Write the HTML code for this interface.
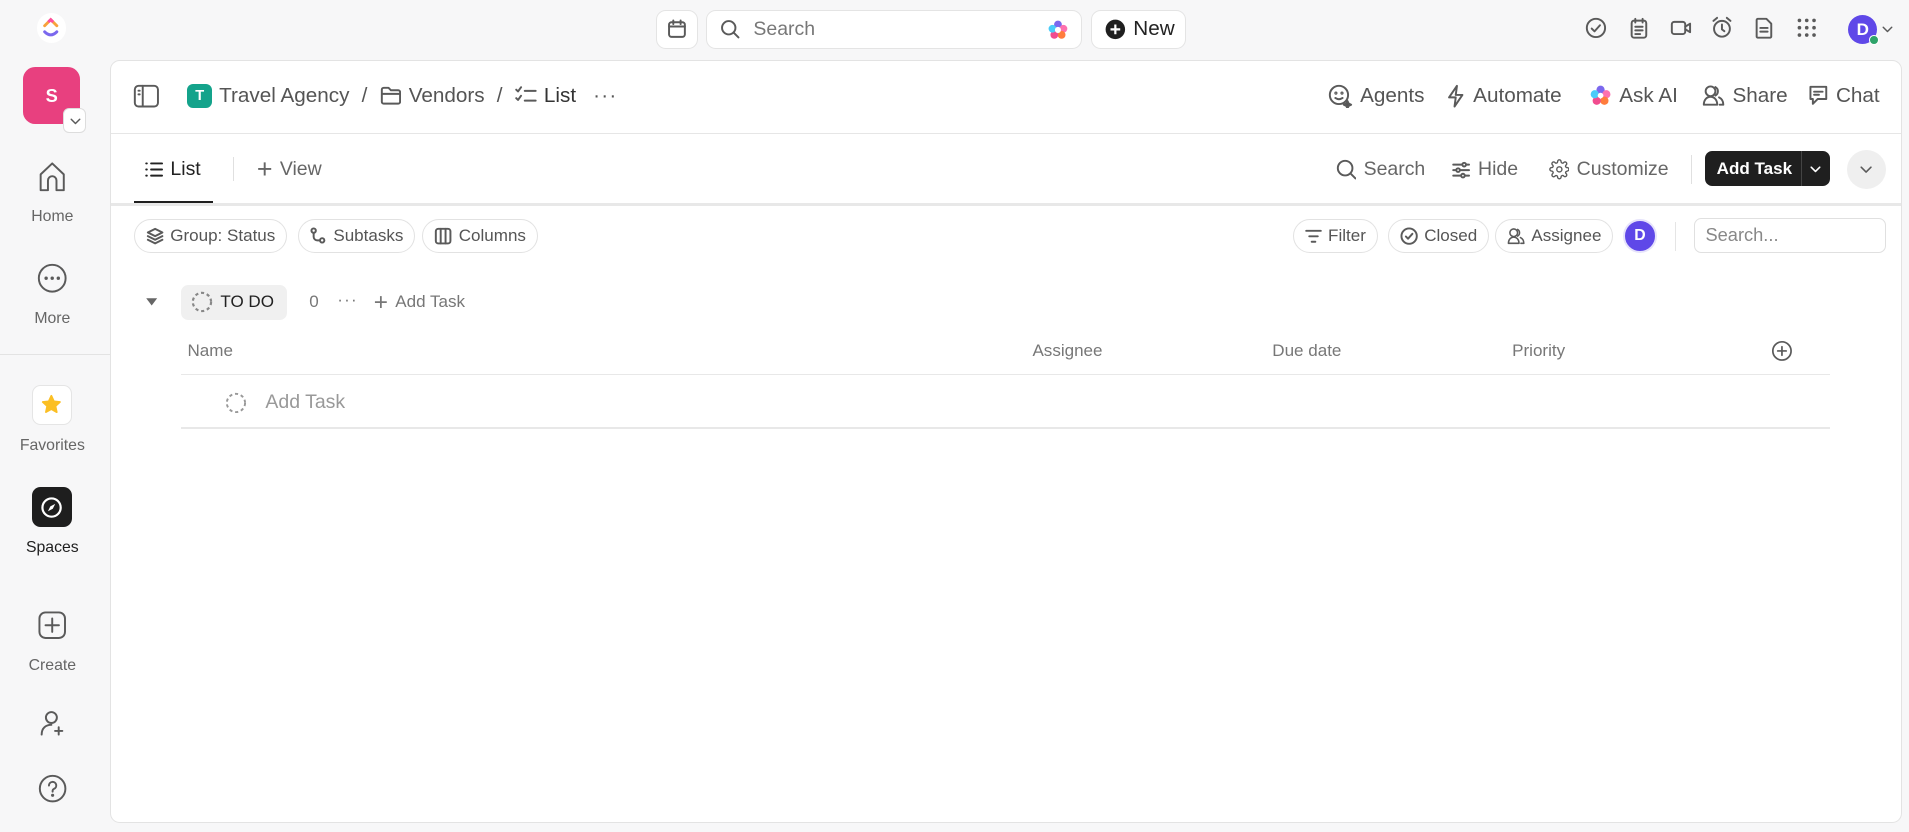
<!DOCTYPE html>
<html><head><meta charset="utf-8"><style>
html{zoom:1.2175}
*{box-sizing:border-box;margin:0;padding:0}
body{width:1568px;height:683px;background:#f7f7f8;font-family:"Liberation Sans",sans-serif;color:#555;position:relative;overflow:hidden}
.a{position:absolute}
svg{display:block}
.ic{fill:none;stroke:#5a5a5a;stroke-width:1.6;stroke-linecap:round;stroke-linejoin:round}
.nav{position:absolute;left:0;width:86px;text-align:center;font-size:13px;color:#666}
.btn{position:absolute;background:#fff;border:1px solid #e4e4e4;border-radius:8px;display:flex;align-items:center}
.chip{position:absolute;top:180px;height:28px;border:1px solid #e2e2e2;border-radius:14px;display:flex;align-items:center;gap:5px;padding:0 9px;font-size:14px;color:#555;background:#fff}
.t{display:flex;align-items:center;gap:6px;position:absolute}
</style></head><body>
<!-- top bar -->
<div class="a" style="left:30px;top:11px;width:24px;height:24px;border-radius:12px;background:#fff"></div>
<svg class="a" style="left:34px;top:13px" width="16" height="20" viewBox="0 0 16 20"><path d="M3 8 L8 3 L13 8" fill="none" stroke="#f7a23b" stroke-width="2.4" stroke-linecap="round"/><path d="M3 13 Q8 18 13 13" fill="none" stroke="#7b68ee" stroke-width="2.4" stroke-linecap="round"/><path d="M6 5 L8 3 L10 5" fill="none" stroke="#fd4ea0" stroke-width="2.4"/></svg>
<div class="btn" style="left:539px;top:8px;width:34px;height:32px;justify-content:center"><svg width="18" height="18" viewBox="0 0 18 18" class="ic"><rect x="2.5" y="3.5" width="13" height="12" rx="2"/><path d="M2.5 7h13M6 2v3M12 2v3"/></svg></div>
<div class="btn" style="left:580px;top:8px;width:309px;height:32px;padding-left:10px"><svg width="18" height="18" viewBox="0 0 18 18" class="ic"><circle cx="8" cy="8" r="5.5"/><path d="M12 12l4 4"/></svg><span style="margin-left:10px;font-size:16px;color:#777">Search</span>
<svg class="a" style="right:10px;top:7px" width="18" height="18" viewBox="0 0 18 18"><circle cx="9" cy="4.5" r="3.2" fill="#7b68ee"/><circle cx="13.5" cy="8" r="3.2" fill="#fd71af"/><circle cx="12" cy="13" r="3.2" fill="#ff7c3d"/><circle cx="6" cy="13" r="3.2" fill="#f14c8f"/><circle cx="4.5" cy="8" r="3.2" fill="#49ccf9"/><circle cx="9" cy="9" r="2.5" fill="#fff"/></svg></div>
<div class="btn" style="left:896px;top:8px;width:78px;height:32px;padding-left:11px;gap:6px"><svg width="17" height="17" viewBox="0 0 17 17"><circle cx="8.5" cy="8.5" r="8" fill="#1f1f1f"/><path d="M8.5 4.5v8M4.5 8.5h8" stroke="#fff" stroke-width="1.8"/></svg><span style="font-size:17px;color:#222">New</span></div>
<svg class="a ic" style="left:1302px;top:14px" width="18" height="18" viewBox="0 0 18 18"><circle cx="9" cy="9" r="7.5"/><path d="M5.5 9.5l2.3 2.3 4.5-5"/></svg>
<svg class="a ic" style="left:1337px;top:14px" width="18" height="18" viewBox="0 0 18 18"><rect x="3" y="3" width="12" height="14" rx="2"/><path d="M6 1.5v3M12 1.5v3M6 8h6M6 11h6M6 14h4"/></svg>
<svg class="a ic" style="left:1372px;top:14px" width="18" height="18" viewBox="0 0 18 18"><rect x="1.5" y="4" width="11" height="10" rx="2"/><path d="M12.5 8l4-2.5v7l-4-2.5"/></svg>
<svg class="a ic" style="left:1405px;top:13px" width="18" height="19" viewBox="0 0 18 19"><circle cx="9" cy="10.5" r="6.5"/><path d="M9 7v4l2 1.5M2 4l3-2.5M16 4l-3-2.5"/></svg>
<svg class="a ic" style="left:1440px;top:14px" width="18" height="18" viewBox="0 0 18 18"><path d="M4 1.5h7l4 4V16a1 1 0 0 1-1 1H4a1 1 0 0 1-1-1V2.5a1 1 0 0 1 1-1z"/><path d="M6 9h6M6 12h6"/></svg>
<svg class="a" style="left:1476px;top:15px" width="16" height="16" viewBox="0 0 16 16" fill="#5a5a5a"><circle cx="2" cy="2" r="1.5"/><circle cx="8" cy="2" r="1.5"/><circle cx="14" cy="2" r="1.5"/><circle cx="2" cy="8" r="1.5"/><circle cx="8" cy="8" r="1.5"/><circle cx="14" cy="8" r="1.5"/><circle cx="2" cy="14" r="1.5"/><circle cx="8" cy="14" r="1.5"/><circle cx="14" cy="14" r="1.5"/></svg>
<div class="a" style="left:1518px;top:12px;width:24px;height:24px;border-radius:12px;background:#5f48e8;color:#fff;font-weight:bold;font-size:14px;text-align:center;line-height:24px">D</div>
<div class="a" style="left:1535px;top:29px;width:8px;height:8px;border-radius:4px;background:#2ea36a;border:1px solid #fff"></div>
<svg class="a ic" style="left:1546px;top:21px;stroke-width:1.2" width="9" height="6" viewBox="0 0 9 6"><path d="M1 1l3.5 3.5L8 1"/></svg>

<!-- left nav -->
<div class="a" style="left:19px;top:55px;width:47px;height:47px;border-radius:10px;background:#e8407f;color:#fff;font-weight:bold;font-size:15px;text-align:center;line-height:47px">S</div>
<div class="a" style="left:52px;top:89px;width:19px;height:20px;border-radius:5px;background:#fff;border:1px solid #ddd"><svg class="ic" style="margin:7px 0 0 5px;stroke-width:1.2" width="9" height="6" viewBox="0 0 9 6"><path d="M1 1l3.5 3.5L8 1"/></svg></div>
<svg class="a ic" style="left:30px;top:132px" width="25" height="26" viewBox="0 0 25 26"><path d="M3 24V11L12.5 2 22 11v13h-6v-8a3.5 3.5 0 0 0-7 0v8z"/></svg>
<div class="nav" style="top:171px">Home</div>
<svg class="a ic" style="left:30px;top:216px" width="25" height="25" viewBox="0 0 25 25"><circle cx="12.5" cy="12.5" r="11"/><circle cx="7.5" cy="12.5" r=".6" fill="#555"/><circle cx="12.5" cy="12.5" r=".6" fill="#555"/><circle cx="17.5" cy="12.5" r=".6" fill="#555"/></svg>
<div class="nav" style="top:255px">More</div>
<div class="a" style="left:0;top:291px;width:90px;height:1px;background:#e3e3e3"></div>
<div class="a" style="left:26px;top:316px;width:33px;height:33px;border-radius:7px;background:#fff;border:1px solid #e5e5e5"></div>
<svg class="a" style="left:34px;top:324px" width="17" height="17" viewBox="0 0 24 24"><path d="M12 2l3 6.5 7 .8-5.2 4.8 1.5 7L12 17.6 5.7 21l1.5-7L2 9.3l7-.8z" fill="#fbbf24" stroke="#fbbf24" stroke-width="2" stroke-linejoin="round"/></svg>
<div class="nav" style="top:359px">Favorites</div>
<div class="a" style="left:26px;top:400px;width:33px;height:33px;border-radius:7px;background:#1e1e1e"></div>
<svg class="a" style="left:33px;top:407px" width="19" height="19" viewBox="0 0 19 19"><circle cx="9.5" cy="9.5" r="7.5" fill="none" stroke="#fff" stroke-width="1.8"/><path d="M12.5 6.5L10.5 10.5 6.5 12.5 8.5 8.5z" fill="#fff"/></svg>
<div class="nav" style="top:443px;color:#1f1f1f">Spaces</div>
<svg class="a ic" style="left:30px;top:501px" width="25" height="25" viewBox="0 0 25 25"><rect x="2" y="2" width="21" height="21" rx="5"/><path d="M12.5 7v11M7 12.5h11"/></svg>
<div class="nav" style="top:540px">Create</div>
<svg class="a ic" style="left:31px;top:582px" width="24" height="24" viewBox="0 0 24 24"><circle cx="11" cy="7" r="4.5"/><path d="M3 21c0-5 3-8 8-8M17 15v6M14 18h6"/></svg>
<svg class="a ic" style="left:31px;top:636px" width="24" height="24" viewBox="0 0 24 24"><circle cx="12" cy="12" r="10.5"/><path d="M9 9.5a3 3 0 1 1 4 2.8c-.7.3-1 .9-1 1.7v.5"/><circle cx="12" cy="17.5" r=".5" fill="#555"/></svg>

<!-- main panel -->
<div class="a" style="left:90px;top:49px;width:1472px;height:627px;background:#fff;border:1px solid #e3e3e3;border-radius:8px"></div>
<svg class="a ic" style="left:109px;top:69px" width="22" height="20" viewBox="0 0 22 20"><rect x="1.5" y="1.5" width="19" height="17" rx="3"/><path d="M8 1.5v17M4.5 5.5h1M4.5 8.5h1"/></svg>
<div class="t" style="left:154px;top:69px;font-size:17px;color:#555">
<span style="width:20px;height:20px;border-radius:5px;background:#14a38b;color:#fff;font-size:12px;font-weight:bold;display:inline-block;text-align:center;line-height:20px">T</span>Travel Agency<span style="margin:0 4px">/</span>
<svg class="ic" width="18" height="16" viewBox="0 0 18 16"><path d="M1.5 3a1.5 1.5 0 0 1 1.5-1.5h4l2 2h6a1.5 1.5 0 0 1 1.5 1.5v8a1.5 1.5 0 0 1-1.5 1.5H3A1.5 1.5 0 0 1 1.5 13z M1.5 6.5h15"/></svg>Vendors<span style="margin:0 4px">/</span>
<svg class="ic" width="18" height="16" viewBox="0 0 18 16"><path d="M1 3l1.5 1.5L5 1M1 10l1.5 1.5L5 8M8 4h9M8 12h9"/></svg><span style="color:#333">List</span><span style="margin-left:8px;letter-spacing:1px">···</span></div>
<div class="t" style="right:calc(1568px - 1170px);top:69px;font-size:17px"><svg class="ic" width="20" height="20" viewBox="0 0 20 20"><circle cx="9" cy="9" r="7.5"/><path d="M6 11.5q3 2 6 0"/><circle cx="6.5" cy="7.5" r=".5"/><circle cx="11.5" cy="7.5" r=".5"/><path d="M16 14l1 2 2 1-2 1-1 2-1-2-2-1 2-1z" fill="#555"/></svg>Agents</div>
<div class="t" style="left:1188px;top:69px;font-size:17px"><svg class="ic" width="16" height="20" viewBox="0 0 16 20"><path d="M9 1.5L2.5 11H8l-1 7.5L13.5 9H8z"/></svg>Automate</div>
<div class="t" style="left:1305px;top:69px;font-size:17px"><svg width="19" height="19" viewBox="0 0 18 18"><circle cx="9" cy="4.5" r="3.2" fill="#7b68ee"/><circle cx="13.5" cy="8" r="3.2" fill="#fd71af"/><circle cx="12" cy="13" r="3.2" fill="#ff7c3d"/><circle cx="6" cy="13" r="3.2" fill="#f14c8f"/><circle cx="4.5" cy="8" r="3.2" fill="#49ccf9"/><circle cx="9" cy="9" r="2.2" fill="#fff"/></svg>Ask AI</div>
<div class="t" style="left:1398px;top:69px;font-size:17px"><svg class="ic" width="19" height="19" viewBox="0 0 19 19"><circle cx="7" cy="6" r="4"/><path d="M1.5 17c0-4 2.5-6.5 5.5-6.5s5.5 2.5 5.5 6.5zM11 2.5a4 4 0 0 1 0 7M14 11c2 1 3.5 3 3.5 6h-3"/></svg>Share</div>
<div class="t" style="left:1485px;top:69px;font-size:17px"><svg class="ic" width="17" height="18" viewBox="0 0 17 18"><path d="M2 1.5h13v10H8l-4 4v-4H2z M5 5.5h7M5 8h4"/></svg>Chat</div>
<div class="a" style="left:91px;top:109px;width:1470px;height:1px;background:#e6e6e6"></div>

<!-- tabs -->
<div class="t" style="left:119px;top:130px;font-size:16px;color:#222"><svg class="ic" style="stroke:#222" width="15" height="14" viewBox="0 0 15 14"><path d="M1 2h.5M1 7h.5M1 12h.5M5 2h9M5 7h9M5 12h9"/></svg>List</div>
<div class="a" style="left:110px;top:165px;width:65px;height:3px;background:#1f1f1f"></div>
<div class="a" style="left:191px;top:129px;width:1px;height:20px;background:#e0e0e0"></div>
<div class="t" style="left:211px;top:130px;font-size:16px;color:#666"><span style="font-size:22px;font-weight:300;line-height:18px">+</span>View</div>
<div class="t" style="left:1097px;top:130px;font-size:16px;color:#666"><svg class="ic" width="17" height="17" viewBox="0 0 17 17"><circle cx="7.5" cy="7.5" r="6"/><path d="M12 12l4 4"/></svg>Search</div>
<div class="t" style="left:1193px;top:130px;font-size:16px;color:#666"><svg class="ic" width="15" height="15" viewBox="0 0 15 15"><path d="M1 3h13M1 7.5h13M1 12h13"/><circle cx="10" cy="3" r="1.5" fill="#fff"/><circle cx="5" cy="7.5" r="1.5" fill="#fff"/><circle cx="9" cy="12" r="1.5" fill="#fff"/></svg>Hide</div>
<div class="t" style="left:1272px;top:130px;font-size:16px;color:#666"><svg class="ic" width="17" height="17" viewBox="0 0 24 24"><circle cx="12" cy="12" r="3"/><path d="M19.4 15a1.7 1.7 0 0 0 .3 1.8l.1.1a2 2 0 1 1-2.8 2.8l-.1-.1a1.7 1.7 0 0 0-2.9 1.2V21a2 2 0 0 1-4 0v-.1a1.7 1.7 0 0 0-2.9-1.2l-.1.1a2 2 0 1 1-2.8-2.8l.1-.1A1.7 1.7 0 0 0 3 14H3a2 2 0 0 1 0-4h.1a1.7 1.7 0 0 0 1.2-2.9l-.1-.1a2 2 0 1 1 2.8-2.8l.1.1A1.7 1.7 0 0 0 10 3V3a2 2 0 0 1 4 0v.1a1.7 1.7 0 0 0 2.9 1.2l.1-.1a2 2 0 1 1 2.8 2.8l-.1.1A1.7 1.7 0 0 0 21 10h.1a2 2 0 0 1 0 4z"/></svg>Customize</div>
<div class="a" style="left:1389px;top:127px;width:1px;height:24px;background:#e0e0e0"></div>
<div class="a" style="left:1400px;top:124px;width:103px;height:29px;border-radius:6px;background:#1f1f1f;color:#fff;font-size:14px;font-weight:bold;line-height:29px;padding-left:10px">Add Task<div class="a" style="left:79px;top:0;width:1px;height:29px;background:#444"></div><svg class="a ic" style="left:87px;top:12px;stroke:#fff;stroke-width:1.3" width="9" height="6" viewBox="0 0 9 6"><path d="M1 1l3.5 3.5L8 1"/></svg></div>
<div class="a" style="left:1517px;top:123px;width:32px;height:32px;border-radius:16px;background:#efefef"><svg class="ic" style="margin:13px 0 0 11px;stroke-width:1.3" width="10" height="7" viewBox="0 0 10 7"><path d="M1 1l4 4 4-4"/></svg></div>
<div class="a" style="left:91px;top:167px;width:1470px;height:2px;background:#e8e8e8"></div>

<!-- filter row -->
<div class="chip" style="left:110px"><svg class="ic" width="15" height="15" viewBox="0 0 15 15"><path d="M7.5 1.5l6 3-6 3-6-3zM1.5 7.5l6 3 6-3M1.5 10.5l6 3 6-3"/></svg>Group: Status</div>
<div class="chip" style="left:245px"><svg class="ic" width="14" height="15" viewBox="0 0 14 15"><circle cx="3" cy="3" r="1.8"/><circle cx="10" cy="11" r="1.8"/><path d="M3 5v3a3 3 0 0 0 3 3h2"/></svg>Subtasks</div>
<div class="chip" style="left:347px"><svg class="ic" width="15" height="15" viewBox="0 0 15 15"><rect x="1.5" y="1.5" width="12" height="12" rx="2"/><path d="M5.5 1.5v12M9.5 1.5v12"/></svg>Columns</div>
<div class="chip" style="left:1062px"><svg class="ic" width="14" height="12" viewBox="0 0 14 12"><path d="M1 1.5h12M3.5 6h7M5.5 10.5h3"/></svg>Filter</div>
<div class="chip" style="left:1140px"><svg class="ic" width="15" height="15" viewBox="0 0 15 15"><circle cx="7.5" cy="7.5" r="6.3"/><path d="M4.8 7.8l1.8 1.8 3.6-4"/></svg>Closed</div>
<div class="chip" style="left:1228px"><svg class="ic" width="15" height="15" viewBox="0 0 19 19"><circle cx="7" cy="6" r="4"/><path d="M1.5 17c0-4 2.5-6.5 5.5-6.5s5.5 2.5 5.5 6.5zM11 2.5a4 4 0 0 1 0 7M14 11c2 1 3.5 3 3.5 6h-3"/></svg>Assignee</div>
<div class="a" style="left:1333px;top:180px;width:28px;height:28px;border-radius:14px;background:#5f48e8;border:2px solid #e6e3fb;color:#fff;font-weight:bold;font-size:13px;text-align:center;line-height:24px">D</div>
<div class="a" style="left:1376px;top:182px;width:1px;height:24px;background:#e5e5e5"></div>
<div class="a" style="left:1391px;top:179px;width:158px;height:29px;border:1px solid #e0e0e0;border-radius:6px;font-size:15px;color:#888;line-height:27px;padding-left:9px">Search...</div>

<!-- group -->
<svg class="a" style="left:119px;top:244px" width="11" height="8" viewBox="0 0 11 8"><path d="M1 1h9L5.5 7z" fill="#666"/></svg>
<div class="a" style="left:149px;top:234px;width:87px;height:29px;border-radius:6px;background:#f0f0f0"></div>
<div class="t" style="left:157px;top:239px;font-size:14px;color:#222"><svg width="18" height="18" viewBox="0 0 18 18"><circle cx="9" cy="9" r="7.5" fill="none" stroke="#888" stroke-width="1.8" stroke-dasharray="2.6 2.3"/></svg>TO DO</div>
<div class="a" style="left:254px;top:240px;font-size:14px;color:#777">0</div>
<div class="a" style="left:277px;top:238px;font-size:14px;color:#777;letter-spacing:1px">···</div>
<div class="t" style="left:307px;top:240px;font-size:14px;color:#777;gap:6px"><span style="font-size:20px;font-weight:300;line-height:14px">+</span>Add Task</div>

<div class="a" style="left:154px;top:280px;font-size:14px;color:#777">Name</div>
<div class="a" style="left:848px;top:280px;font-size:14px;color:#777">Assignee</div>
<div class="a" style="left:1045px;top:280px;font-size:14px;color:#777">Due date</div>
<div class="a" style="left:1242px;top:280px;font-size:14px;color:#777">Priority</div>
<svg class="a ic" style="left:1455px;top:279px;stroke-width:1.4" width="18" height="18" viewBox="0 0 18 18"><circle cx="9" cy="9" r="7.5"/><path d="M9 5.5v7M5.5 9h7"/></svg>
<div class="a" style="left:149px;top:307px;width:1354px;height:1px;background:#e8e8e8"></div>
<svg class="a" style="left:185px;top:322px" width="18" height="18" viewBox="0 0 18 18"><circle cx="9" cy="9" r="7.5" fill="none" stroke="#999" stroke-width="1.6" stroke-dasharray="2.6 2.3"/></svg>
<div class="a" style="left:218px;top:321px;font-size:16px;color:#999">Add Task</div>
<div class="a" style="left:149px;top:351px;width:1354px;height:1px;background:#e8e8e8"></div>
</body></html>
